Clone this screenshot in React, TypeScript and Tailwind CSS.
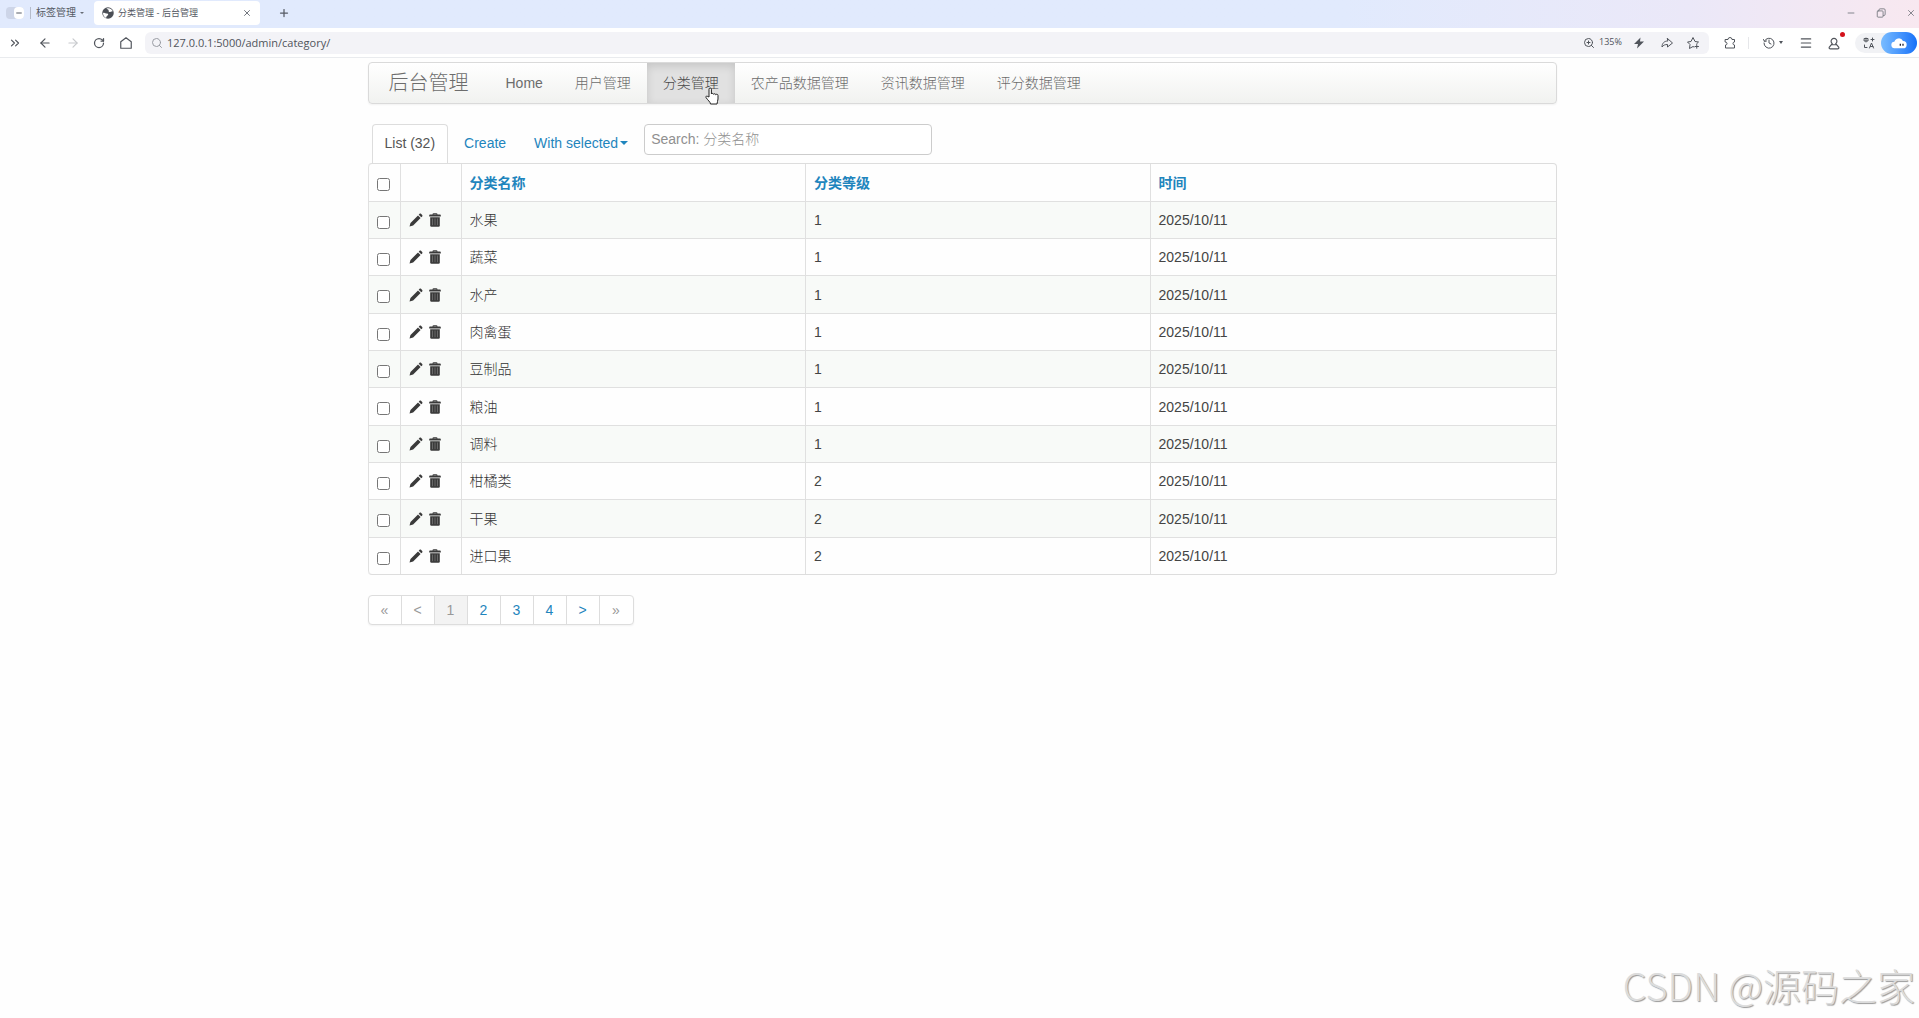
import { useState } from "react";
import type { ReactNode } from "react";
import {
  ArrowLeft,
  ArrowRight,
  ChevronsRight,
  Menu,
  Minus,
  Plus,
  RotateCw,
  Search,
  X,
  ZoomIn,
} from "lucide-react";

const rows = [
  { name: "水果", level: 1, time: "2025/10/11" },
  { name: "蔬菜", level: 1, time: "2025/10/11" },
  { name: "水产", level: 1, time: "2025/10/11" },
  { name: "肉禽蛋", level: 1, time: "2025/10/11" },
  { name: "豆制品", level: 1, time: "2025/10/11" },
  { name: "粮油", level: 1, time: "2025/10/11" },
  { name: "调料", level: 1, time: "2025/10/11" },
  { name: "柑橘类", level: 2, time: "2025/10/11" },
  { name: "干果", level: 2, time: "2025/10/11" },
  { name: "进口果", level: 2, time: "2025/10/11" },
];

const menu = ["Home", "用户管理", "分类管理", "农产品数据管理", "资讯数据管理", "评分数据管理"];

const pages = [
  { label: "«", state: "disabled" },
  { label: "<", state: "disabled" },
  { label: "1", state: "active" },
  { label: "2", state: "link" },
  { label: "3", state: "link" },
  { label: "4", state: "link" },
  { label: ">", state: "link" },
  { label: "»", state: "disabled" },
];

function IconButton({ label, className = "", children }: { label: string; className?: string; children: ReactNode }) {
  return (
    <button type="button" aria-label={label} className={`flex shrink-0 items-center justify-center ${className}`}>
      {children}
    </button>
  );
}

function Stroke({ children, className = "size-3.5" }: { children: ReactNode; className?: string }) {
  return (
    <svg
      viewBox="0 0 24 24"
      className={className}
      fill="none"
      stroke="currentColor"
      strokeWidth="2"
      strokeLinecap="round"
      strokeLinejoin="round"
    >
      {children}
    </svg>
  );
}

function PencilIcon() {
  return (
    <svg viewBox="0 0 14 14" className="size-3.5" fill="currentColor">
      <path d="M.5 13.500l1-3.600L9 2.400l2.600 2.600L4.100 12.500z" />
      <path d="M9.700 1.700l.9-.9c.4-.4 1-.4 1.400 0l1.200 1.200c.4.4.4 1 0 1.400l-.9.9z" />
    </svg>
  );
}

function TrashIcon() {
  return (
    <svg viewBox="0 0 14 14" className="size-3.5" fill="currentColor">
      <path d="M4.500 1.500Q4.500.300 5.700.300h2.600q1.200 0 1.200 1.200H12q.8 0 .8.8v1.200H1.200V2.300q0-.8.8-.8zm1 0h3V1.200h-3z" />
      <path d="M2.200 4.200h9.600v8.300q0 1.200-1.200 1.200H3.400q-1.200 0-1.200-1.200z" />
      <path d="M4.500 5.500v6.700M7 5.500v6.700M9.500 5.500v6.700" stroke="#888" strokeWidth=".6" />
    </svg>
  );
}

function Globe() {
  return (
    <svg viewBox="0 0 24 24" className="size-3 shrink-0">
      <circle cx="12" cy="12" r="11.500" fill="#4b4f56" />
      <path d="M2 12c3-2 5 1 8 1s3 3 1 4-2 3-3 5C4 20 2 16 2 12zM9 3c1 2 3 1 4 3s-1 4 3 4 4-2 6-1c-2-5-7-8-13-6z" fill="#fff" />
    </svg>
  );
}

function TabBar() {
  return (
    <header className="flex h-7 items-center bg-linear-to-r from-[#e1eafd] from-70% via-[#ebe8f8] via-88% to-[#f8e8f0] pb-0.5 text-[#555a64]">
      <div className="ml-1.5 flex h-3 w-[18px] items-center justify-end rounded-sm bg-[#cdd5e8]">
        <span className="flex h-3 w-2.5 items-center justify-center rounded-sm bg-white">
          <Minus className="size-2" strokeWidth={3} />
        </span>
      </div>
      <span className="ml-1.5 h-3 w-px bg-[#b5bccb]" />
      <button type="button" className="ml-[5px] flex items-center gap-1 text-[10px]">
        标签管理
        <span className="border-x-2 border-t-2 border-x-transparent border-t-[#666b75]" />
      </button>
      <div className="ml-2.5 flex h-6 w-[166px] items-center gap-1 rounded-sm bg-white px-2">
        <Globe />
        <span className="flex-1 text-[9px]">分类管理 - 后台管理</span>
        <IconButton label="关闭标签">
          <X className="size-2.5" />
        </IconButton>
      </div>
      <IconButton label="新建标签" className="ml-[18px]">
        <Plus className="size-3" strokeWidth={2.5} />
      </IconButton>
      <div className="mr-[3px] ml-auto flex items-center gap-5 text-[#70737b]">
        <IconButton label="最小化">
          <Minus className="size-2.5" />
        </IconButton>
        <IconButton label="还原">
          <Stroke className="size-2.5">
            <path d="M7 6V5a3 3 0 013-3h9a3 3 0 013 3v10a3 3 0 01-3 3h-1M5 7h10a2 2 0 012 2v11a2 2 0 01-2 2H5a2 2 0 01-2-2V9a2 2 0 012-2z" />
          </Stroke>
        </IconButton>
        <IconButton label="关闭">
          <X className="size-2.5" />
        </IconButton>
      </div>
    </header>
  );
}

function Toolbar() {
  return (
    <div className="flex h-[30px] items-center border-b border-[#e9ebee] bg-white text-[#50545b]">
      <IconButton label="展开侧栏" className="ml-2">
        <ChevronsRight className="size-3.5" />
      </IconButton>
      <IconButton label="后退" className="ml-4">
        <ArrowLeft className="size-3.5" />
      </IconButton>
      <IconButton label="前进" className="ml-3.5 text-[#c8cacd]">
        <ArrowRight className="size-3.5" />
      </IconButton>
      <IconButton label="刷新" className="ml-[13px]">
        <RotateCw className="size-3" strokeWidth={2.5} />
      </IconButton>
      <IconButton label="主页" className="ml-3.5">
        <Stroke>
          <path d="M3 10l9-7 9 7v11H3z" />
        </Stroke>
      </IconButton>
      <div className="ml-3 flex h-[22px] flex-1 items-center rounded-md bg-[#f3f3f7] pr-2.5 pl-1.5">
        <Search className="size-3 text-[#999ca3]" />
        <input
          aria-label="地址"
          defaultValue="127.0.0.1:5000/admin/category/"
          className="ml-1 min-w-0 flex-1 bg-transparent font-['Open_Sans','Noto_Sans_CJK_SC',sans-serif] text-[11px] outline-none"
        />
        <ZoomIn className="size-3" />
        <span className="ml-1 w-5 font-['Open_Sans',sans-serif] text-[9px]">135%</span>
        <IconButton label="加速" className="ml-3.5">
          <svg viewBox="0 0 24 24" className="size-3" fill="currentColor">
            <path d="M15 1L2 14h8l-2 9L22 9h-8z" />
          </svg>
        </IconButton>
        <IconButton label="分享" className="ml-4">
          <Stroke className="size-3">
            <path d="M13 3l10 9-10 8v-5c-5 0-8 1-11 5 0-7 4-12 11-12z" />
          </Stroke>
        </IconButton>
        <IconButton label="收藏" className="ml-3.5">
          <Stroke className="size-3">
            <path d="M14 20l-2-1-7 4 1-8-5-5 7-1 4-8 4 8 7 1-4 4M16 19h7M19.500 15.500v7" />
          </Stroke>
        </IconButton>
      </div>
      <IconButton label="扩展" className="ml-[15px]">
        <Stroke className="size-3">
          <path d="M3 5h5a4 4 0 018 0h5v5a3 3 0 000 6v6H3v-6a3 3 0 000-6z" />
        </Stroke>
      </IconButton>
      <span className="ml-3 h-3 w-px bg-[#e6e7ea]" />
      <IconButton label="历史" className="ml-3.5 gap-1">
        <Stroke className="size-3">
          <path d="M3 8a10 10 0 11-1 4M1 5l2 4 4-1M12 6v6l4 2" />
        </Stroke>
        <span className="border-x-2 border-t-3 border-x-transparent border-t-[#50545b]" />
      </IconButton>
      <IconButton label="菜单" className="ml-4">
        <Menu className="size-3.5" />
      </IconButton>
      <IconButton label="账户" className="relative ml-3.5">
        <Stroke>
          <path d="M9 13a5 5 0 116 0l5 6c1 2 0 3-2 3H6c-2 0-3-1-2-3zM8 15h8" />
        </Stroke>
        <span className="absolute -top-1 -right-1 size-[5px] rounded-full bg-[#d3121b]" />
      </IconButton>
      <div className="ml-3.5 flex h-5 items-center rounded-full bg-[#f1f2f5] pl-2">
        <IconButton label="翻译">
          <Stroke className="size-3">
            <path d="M3 3h7v5H3zM6 2v8M3 16v5h5M13 22l4-10 4 10M15 19h5M16 5h6M19 2v6" />
          </Stroke>
        </IconButton>
        <IconButton label="云助手" className="ml-1.5 h-[22px] w-9 rounded-full bg-linear-to-r from-[#79bcff] to-[#1270f8]">
          <svg viewBox="0 0 24 18" className="w-4">
            <path d="M6 17a5 5 0 01-1-10 7 7 0 0113-1 5.500 5.500 0 010 11z" fill="#fff" />
            <path d="M14 10v3M18 10v3" stroke="#223" strokeWidth="2" />
          </svg>
        </IconButton>
      </div>
      <span className="w-0.5" />
    </div>
  );
}

function HandCursor() {
  return (
    <svg viewBox="0 0 14 18" className="pointer-events-none absolute top-6 right-4 w-3.5">
      <path
        d="M4 10V2.200a1.200 1.200 0 012.400 0V7a1.200 1.200 0 012.200.3 1.200 1.200 0 012.200.5 1.200 1.200 0 012.200.7V12c0 2-1 3-1 5H5.500c0-2-3-4-4.500-6.500-.5-1.200.8-2 1.800-1z"
        fill="#fff"
        stroke="#222"
      />
    </svg>
  );
}

function Navbar() {
  return (
    <nav className="flex h-[42px] items-stretch rounded-sm border border-[#dadada] bg-linear-to-b from-white to-[#f1f2f0] font-light text-[#6c6c6c] shadow-xs">
      <a href="#" className="flex w-[121px] items-center pl-5 text-xl">
        后台管理
      </a>
      {menu.map((item) => (
        <a
          key={item}
          href="#"
          className={
            item === "分类管理"
              ? "relative flex items-center bg-[#e1e1e1] px-4 text-[#484848] shadow-[inset_0_3px_8px_rgba(0,0,0,0.125)]"
              : "flex items-center px-4"
          }
        >
          {item}
          {item === "分类管理" && <HandCursor />}
        </a>
      ))}
    </nav>
  );
}

export default function App() {
  const [selected, setSelected] = useState<string[]>([]);

  const toggle = (name: string) => {
    setSelected(selected.includes(name) ? selected.filter((n) => n !== name) : [...selected, name]);
  };

  return (
    <div className="relative flex min-h-screen flex-col bg-[#fefefe] font-['Liberation_Sans','Noto_Sans_CJK_SC',sans-serif] text-sm text-[#444]">
      <TabBar />
      <Toolbar />
      <div className="w-full pt-1 pl-[5px]">
        <main className="mx-auto max-w-[1189px]">
          <Navbar />
          <div className="mt-5 flex items-start pl-1">
            <a
              href="#"
              className="flex h-[39px] items-center rounded-t-sm border border-b-0 border-[#ddd] bg-white px-3 pb-0.5 text-[#555]"
            >
              List (32)
            </a>
            <a href="#" className="flex h-[39px] items-center px-4 pb-px text-[#1f85bd]">
              Create
            </a>
            <button type="button" className="flex h-[39px] items-center gap-0.5 px-3 pb-px text-[#1f85bd]">
              With selected
              <span className="border-x-4 border-t-4 border-x-transparent border-t-[#1f85bd]" />
            </button>
            <input
              type="text"
              aria-label="Search"
              placeholder="Search: 分类名称"
              className="ml-1 h-[31px] w-72 rounded-sm border border-[#ccc] bg-white px-1.5 pb-0.5 font-light outline-none placeholder:text-[#909090]"
            />
          </div>
          <table className="w-full table-fixed border-separate border-spacing-0 rounded-sm border border-l-0 border-[#ddd] text-left [&_td]:border-l [&_td]:border-[#e0e0e0] [&_th]:border-l [&_th]:border-[#e0e0e0]">
            <colgroup>
              <col className="w-8" />
              <col className="w-[61px]" />
              <col className="w-[29%]" />
              <col className="w-[29%]" />
              <col />
            </colgroup>
            <thead>
              <tr className="h-[37px] text-[#1f85bd]">
                <th className="rounded-tl-sm pt-1 pl-2">
                  <input
                    type="checkbox"
                    aria-label="Select all records"
                    className="block size-[13px]"
                    checked={selected.length === rows.length}
                    onChange={(e) => setSelected(e.target.checked ? rows.map((r) => r.name) : [])}
                  />
                </th>
                <th></th>
                <th className="pl-2">
                  <a href="#">分类名称</a>
                </th>
                <th className="pl-2">
                  <a href="#">分类等级</a>
                </th>
                <th className="pl-2">
                  <a href="#">时间</a>
                </th>
              </tr>
            </thead>
            <tbody className="font-light [&_td]:border-t [&_tr:last-child_td:first-child]:rounded-bl-sm">
              {rows.map((row) => (
                <tr key={row.name} className="h-[37px] odd:bg-[#f8faf8] nth-[3n]:h-[38px]">
                  <td className="pt-1 pl-2">
                    <input
                      type="checkbox"
                      aria-label={row.name}
                      className="block size-[13px]"
                      checked={selected.includes(row.name)}
                      onChange={() => toggle(row.name)}
                    />
                  </td>
                  <td className="pl-2">
                    <div className="flex gap-[5px] text-[#3a3a3a]">
                      <IconButton label="Edit record">
                        <PencilIcon />
                      </IconButton>
                      <IconButton label="Delete record">
                        <TrashIcon />
                      </IconButton>
                    </div>
                  </td>
                  <td className="pl-2 text-[#333]">{row.name}</td>
                  <td className="pl-2">{row.level}</td>
                  <td className="pl-2">{row.time}</td>
                </tr>
              ))}
            </tbody>
          </table>
          <ul className="mt-5 inline-flex h-[30px] divide-x divide-[#ddd] overflow-hidden rounded-sm border border-[#ddd] bg-white shadow-xs">
            {pages.map((page) => (
              <li key={page.label} className="flex w-[33px]">
                <a
                  href="#"
                  className={
                    page.state === "link"
                      ? "flex flex-1 items-center justify-center text-[#1f85bd]"
                      : page.state === "active"
                        ? "flex flex-1 items-center justify-center bg-[#f3f3f3] text-[#999]"
                        : "flex flex-1 items-center justify-center text-[#999]"
                  }
                >
                  {page.label}
                </a>
              </li>
            ))}
          </ul>
        </main>
      </div>
      <p className="absolute right-1 bottom-1.5 font-['Noto_Sans_CJK_SC',sans-serif] text-[38px] font-light text-[#dcdcdc] [text-shadow:1px_1px_1px_#999]">
        CSDN @源码之家
      </p>
    </div>
  );
}
